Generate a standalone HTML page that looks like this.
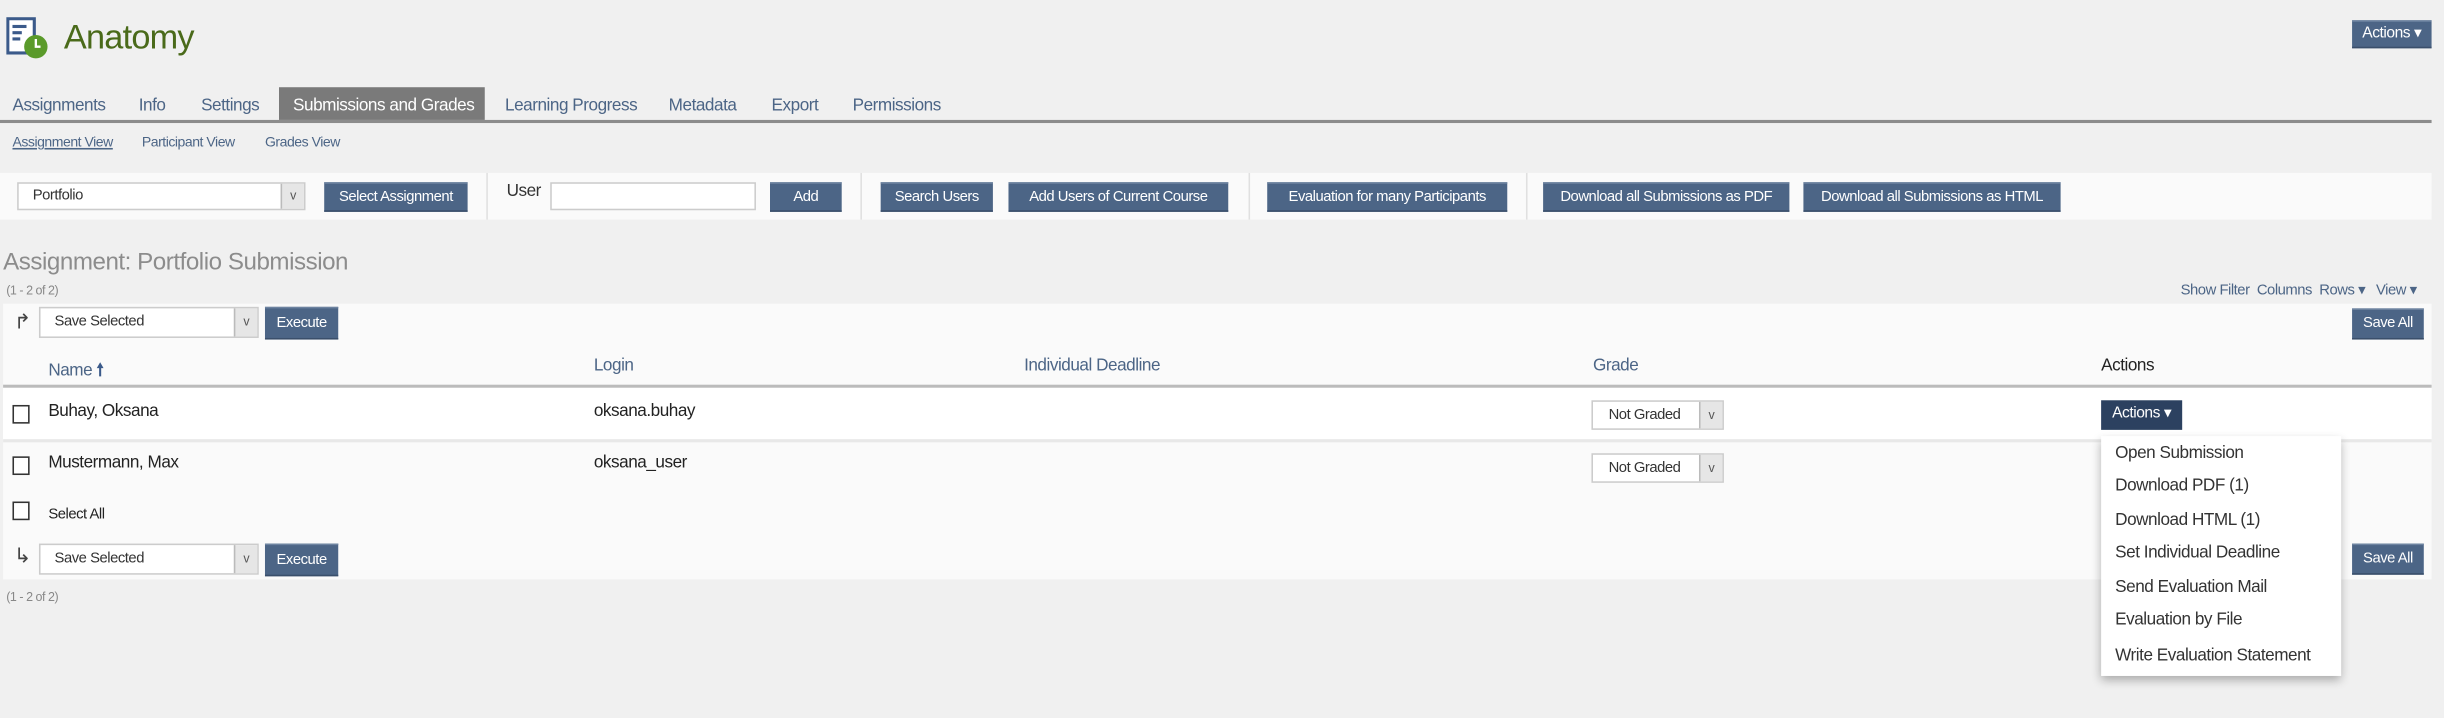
<!DOCTYPE html>
<html><head><meta charset="utf-8"><style>
html,body{margin:0;padding:0;background:#f0f0f0;overflow:hidden}
body{width:2444px;height:718px}
#w{position:absolute;left:0;top:0;width:1568px;height:461px;transform:scale(1.5587,1.5575);transform-origin:0 0;font-family:"Liberation Sans",sans-serif;letter-spacing:-0.3px}
.a{position:absolute;white-space:nowrap}
.btn{position:absolute;background:#4c6586;color:#fff;font-size:9.5px;text-align:center;box-sizing:border-box;border-top:1px solid #6d83a0;border-bottom:1px solid #3a4f6b}
.sel{position:absolute;background:#fff;border:1px solid #ccc;box-sizing:border-box;font-size:9.5px;color:#333}
.sel .ar{position:absolute;right:0;top:0;bottom:0;width:14px;background:#e6e6e6;border-left:1px solid #bbb;font-size:8px;text-align:center;color:#555}
.tab{position:absolute;top:62px;font-size:11px;color:#4c6586}
.cb{position:absolute;width:9px;height:10px;border:1px solid #333;background:#fff}
.mi{position:absolute;left:1357px;font-size:11px;color:#333}
</style></head><body><div id="w">
<svg class="a" style="left:4px;top:11px" width="28" height="28" viewBox="0 0 28 28">
<rect x="1" y="1" width="17" height="22" fill="#fff" stroke="#3b5a8a" stroke-width="2"/>
<rect x="4" y="5" width="9" height="2" fill="#3b5a8a"/><rect x="4" y="9" width="6" height="2" fill="#3b5a8a"/><rect x="4" y="13" width="5" height="2" fill="#3b5a8a"/>
<circle cx="19" cy="19" r="7.5" fill="#5a9a2a"/><path d="M19 14v5h3" stroke="#fff" stroke-width="1.5" fill="none"/></svg>
<div class="a" style="left:41px;top:11px;font-size:22px;color:#4a6a1a;letter-spacing:-0.5px">Anatomy</div>
<div class="btn" style="left:1509px;top:13px;width:51px;height:18px;line-height:16px;font-size:10px">Actions ▾</div>

<div class="a" style="left:179px;top:56px;width:132px;height:21px;background:#7a7a7a"></div>
<div class="a" style="left:0;top:77px;width:1560px;height:2px;background:#8c8c8c"></div>
<div class="tab" style="left:8px">Assignments</div>
<div class="tab" style="left:89px">Info</div>
<div class="tab" style="left:129px">Settings</div>
<div class="tab" style="left:188px;color:#fff">Submissions and Grades</div>
<div class="tab" style="left:324px">Learning Progress</div>
<div class="tab" style="left:429px">Metadata</div>
<div class="tab" style="left:495px">Export</div>
<div class="tab" style="left:547px">Permissions</div>
<div class="a" style="left:8px;top:86px;font-size:9px;color:#4c6586;text-decoration:underline">Assignment View</div>
<div class="a" style="left:91px;top:86px;font-size:9px;color:#4c6586">Participant View</div>
<div class="a" style="left:170px;top:86px;font-size:9px;color:#4c6586">Grades View</div>

<div class="a" style="left:0;top:111px;width:1560px;height:30px;background:#fafafa"></div>
<div class="sel" style="left:11px;top:117px;width:185px;height:18px;line-height:16px;padding-left:9px">Portfolio<div class="ar">v</div></div>
<div class="btn" style="left:208px;top:117px;width:92px;height:19px;line-height:17px">Select Assignment</div>
<div class="a" style="left:312px;top:111px;width:1px;height:30px;background:#e0e0e0"></div>
<div class="a" style="left:325px;top:117px;font-size:11px;color:#333">User</div>
<div class="a" style="left:353px;top:117px;width:132px;height:18px;background:#fff;border:1px solid #ccc;box-sizing:border-box"></div>
<div class="btn" style="left:494px;top:117px;width:46px;height:19px;line-height:17px">Add</div>
<div class="a" style="left:552px;top:111px;width:1px;height:30px;background:#e0e0e0"></div>
<div class="btn" style="left:565px;top:117px;width:72px;height:19px;line-height:17px">Search Users</div>
<div class="btn" style="left:647px;top:117px;width:141px;height:19px;line-height:17px">Add Users of Current Course</div>
<div class="a" style="left:801px;top:111px;width:1px;height:30px;background:#e0e0e0"></div>
<div class="btn" style="left:813px;top:117px;width:154px;height:19px;line-height:17px">Evaluation for many Participants</div>
<div class="a" style="left:979px;top:111px;width:1px;height:30px;background:#e0e0e0"></div>
<div class="btn" style="left:990px;top:117px;width:158px;height:19px;line-height:17px">Download all Submissions as PDF</div>
<div class="btn" style="left:1157px;top:117px;width:165px;height:19px;line-height:17px">Download all Submissions as HTML</div>

<div class="a" style="left:2px;top:160px;font-size:15.5px;color:#8c8c8c">Assignment: Portfolio Submission</div>
<div class="a" style="left:4px;top:182px;font-size:8px;color:#888">(1 - 2 of 2)</div>
<div class="a" style="left:1399px;top:181px;font-size:9.5px;color:#4c6586">Show Filter&nbsp; Columns&nbsp; Rows ▾&nbsp;&nbsp; View ▾</div>

<div class="a" style="left:2px;top:195px;width:1558px;height:177px;background:#fafafa"></div>
<div class="a" style="left:9px;top:199px;font-size:13px;color:#444">↱</div>
<div class="sel" style="left:25px;top:197px;width:141px;height:20px;line-height:18px;padding-left:9px">Save Selected<div class="ar">v</div></div>
<div class="btn" style="left:170px;top:197px;width:47px;height:21px;line-height:19px">Execute</div>
<div class="btn" style="left:1509px;top:198px;width:46px;height:20px;line-height:18px">Save All</div>
<div class="a" style="left:31px;top:229px;font-size:11px;color:#4c6586">Name <b style="color:#3b5a8a">🠕</b></div>
<div class="a" style="left:381px;top:229px;font-size:11px;color:#4c6586">Login</div>
<div class="a" style="left:657px;top:229px;font-size:11px;color:#4c6586">Individual Deadline</div>
<div class="a" style="left:1022px;top:229px;font-size:11px;color:#4c6586">Grade</div>
<div class="a" style="left:1348px;top:229px;font-size:11px;color:#222">Actions</div>
<div class="a" style="left:2px;top:247px;width:1558px;height:2px;background:#bbb"></div>
<div class="a" style="left:2px;top:249px;width:1558px;height:33px;background:#fff"></div>
<div class="a" style="left:2px;top:282px;width:1558px;height:2px;background:#e8e8e8"></div>
<div class="cb" style="left:8px;top:260px"></div>
<div class="a" style="left:31px;top:258px;font-size:11px;color:#222">Buhay, Oksana</div>
<div class="a" style="left:381px;top:258px;font-size:11px;color:#222">oksana.buhay</div>
<div class="sel" style="left:1021px;top:257px;width:85px;height:19px;line-height:17px;padding-left:10px">Not Graded<div class="ar">v</div></div>
<div class="a" style="left:1348px;top:257px;width:52px;height:19px;line-height:18px;background:#2c4160;color:#fff;font-size:10px;text-align:center">Actions ▾</div>
<div class="cb" style="left:8px;top:293px"></div>
<div class="a" style="left:31px;top:291px;font-size:11px;color:#222">Mustermann, Max</div>
<div class="a" style="left:381px;top:291px;font-size:11px;color:#222">oksana_user</div>
<div class="sel" style="left:1021px;top:291px;width:85px;height:19px;line-height:17px;padding-left:10px">Not Graded<div class="ar">v</div></div>
<div class="cb" style="left:8px;top:322px"></div>
<div class="a" style="left:31px;top:325px;font-size:9.5px;color:#222">Select All</div>
<div class="a" style="left:9px;top:349px;font-size:13px;color:#444">↳</div>
<div class="sel" style="left:25px;top:349px;width:141px;height:20px;line-height:18px;padding-left:9px">Save Selected<div class="ar">v</div></div>
<div class="btn" style="left:170px;top:349px;width:47px;height:21px;line-height:19px">Execute</div>
<div class="btn" style="left:1509px;top:349px;width:46px;height:20px;line-height:18px">Save All</div>
<div class="a" style="left:4px;top:379px;font-size:8px;color:#888">(1 - 2 of 2)</div>

<div class="a" style="left:1348px;top:280px;width:154px;height:154px;background:#fff;box-shadow:0 3px 6px rgba(0,0,0,.3)"></div>
<div class="mi" style="top:285px">Open Submission</div>
<div class="mi" style="top:306px">Download PDF (1)</div>
<div class="mi" style="top:328px">Download HTML (1)</div>
<div class="mi" style="top:349px">Set Individual Deadline</div>
<div class="mi" style="top:371px">Send Evaluation Mail</div>
<div class="mi" style="top:392px">Evaluation by File</div>
<div class="mi" style="top:415px">Write Evaluation Statement</div>
</div></body></html>
